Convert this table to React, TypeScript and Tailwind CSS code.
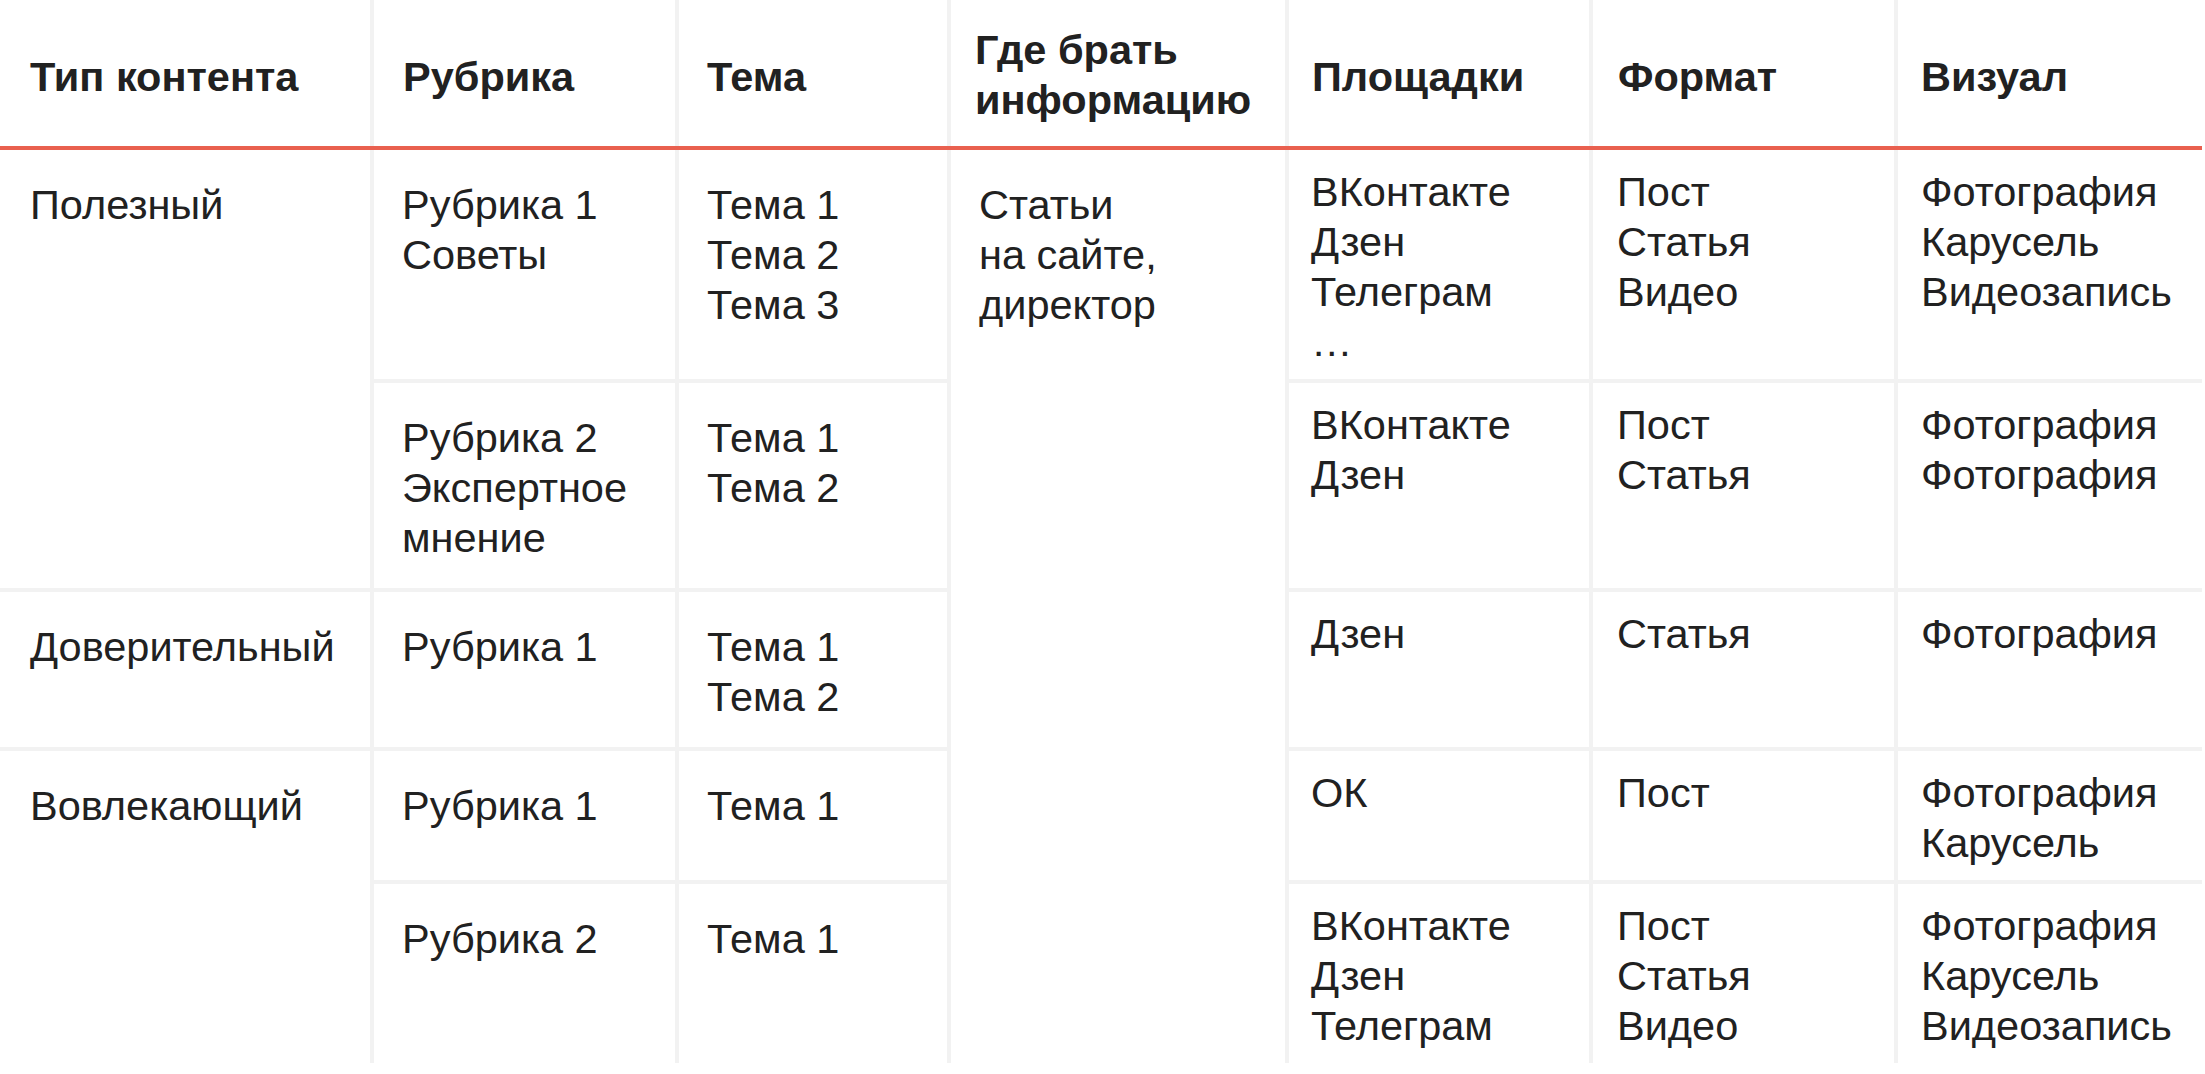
import React from "react";

const COLS = "grid-cols-[370px_301px_268px_334px_300px_301px_304px]";

const headers: { text: string[]; pl: string }[] = [
  { text: ["Тип контента"], pl: "pl-[30px]" },
  { text: ["Рубрика"], pl: "pl-[29px]" },
  { text: ["Тема"], pl: "pl-[28px]" },
  { text: ["Где брать", "информацию"], pl: "pl-[24px]" },
  { text: ["Площадки"], pl: "pl-[23px]" },
  { text: ["Формат"], pl: "pl-[25px]" },
  { text: ["Визуал"], pl: "pl-[23px]" },
];

const P1 = "pl-[30px]";
const P2 = "pl-[28px]";
const P3 = "pl-[28px]";
const P4 = "pl-[28px]";
const P5 = "pl-[22px]";
const P6 = "pl-[24px]";
const P7 = "pl-[23px]";

function Body({ lines, pl, top, className }: { lines: string[]; pl: string; top: "a" | "b"; className: string }) {
  return (
    <div
      className={
        "bg-white " +
        pl +
        " " +
        (top === "a" ? "pt-[30px] pb-[25px] " : "pt-[17px] pb-[12px] ") +
        className
      }
    >
      {lines.map((l, i) => (
        <div key={i} className="whitespace-nowrap">
          {l}
        </div>
      ))}
    </div>
  );
}

export default function App() {
  return (
    <div
      className="w-[2205px] h-[1074px] bg-white text-[#212121] overflow-hidden"
      style={{ fontFamily: '"Liberation Sans", Arial, sans-serif' }}
    >
      <div className="w-[2202px] text-[41.5px] leading-[50px]">
        {/* Header */}
        <div className={"grid " + COLS + " gap-x-[4px] bg-[#f2f2f2] h-[146px]"}>
          {headers.map((h, i) => (
            <div
              key={i}
              className={
                "bg-white font-bold " + h.pl + " " + (h.text.length > 1 ? "pt-[25px]" : "pt-[52px]")
              }
            >
              {h.text.map((t, j) => (
                <div key={j} className="whitespace-nowrap">
                  {t}
                </div>
              ))}
            </div>
          ))}
        </div>
        <div className="h-[4px] bg-[#e9604f]" />
        {/* Body */}
        <div className={"grid " + COLS + " gap-[4px] bg-[#f2f2f2]"}>
          {/* Row A */}
          <Body className="row-span-2 col-start-1 row-start-1" lines={["Полезный"]} pl={P1} top="a" />
          <Body className="col-start-2 row-start-1" lines={["Рубрика 1", "Советы"]} pl={P2} top="a" />
          <Body className="col-start-3 row-start-1" lines={["Тема 1", "Тема 2", "Тема 3"]} pl={P3} top="a" />
          <Body className="col-start-4 row-start-1 row-span-5" lines={["Статьи", "на сайте,", "директор"]} pl={P4} top="a" />
          <Body className="col-start-5 row-start-1" lines={["ВКонтакте", "Дзен", "Телеграм", "…"]} pl={P5} top="b" />
          <Body className="col-start-6 row-start-1" lines={["Пост", "Статья", "Видео"]} pl={P6} top="b" />
          <Body className="col-start-7 row-start-1" lines={["Фотография", "Карусель", "Видеозапись"]} pl={P7} top="b" />
          {/* Row B */}
          <Body className="col-start-2 row-start-2" lines={["Рубрика 2", "Экспертное", "мнение"]} pl={P2} top="a" />
          <Body className="col-start-3 row-start-2" lines={["Тема 1", "Тема 2"]} pl={P3} top="a" />
          <Body className="col-start-5 row-start-2" lines={["ВКонтакте", "Дзен"]} pl={P5} top="b" />
          <Body className="col-start-6 row-start-2" lines={["Пост", "Статья"]} pl={P6} top="b" />
          <Body className="col-start-7 row-start-2" lines={["Фотография", "Фотография"]} pl={P7} top="b" />
          {/* Row C */}
          <Body className="col-start-1 row-start-3" lines={["Доверительный"]} pl={P1} top="a" />
          <Body className="col-start-2 row-start-3" lines={["Рубрика 1"]} pl={P2} top="a" />
          <Body className="col-start-3 row-start-3" lines={["Тема 1", "Тема 2"]} pl={P3} top="a" />
          <Body className="col-start-5 row-start-3" lines={["Дзен"]} pl={P5} top="b" />
          <Body className="col-start-6 row-start-3" lines={["Статья"]} pl={P6} top="b" />
          <Body className="col-start-7 row-start-3" lines={["Фотография"]} pl={P7} top="b" />
          {/* Row D */}
          <Body className="col-start-1 row-start-4 row-span-2" lines={["Вовлекающий"]} pl={P1} top="a" />
          <Body className="col-start-2 row-start-4" lines={["Рубрика 1"]} pl={P2} top="a" />
          <Body className="col-start-3 row-start-4" lines={["Тема 1"]} pl={P3} top="a" />
          <Body className="col-start-5 row-start-4" lines={["ОК"]} pl={P5} top="b" />
          <Body className="col-start-6 row-start-4" lines={["Пост"]} pl={P6} top="b" />
          <Body className="col-start-7 row-start-4" lines={["Фотография", "Карусель"]} pl={P7} top="b" />
          {/* Row E */}
          <Body className="col-start-2 row-start-5" lines={["Рубрика 2"]} pl={P2} top="a" />
          <Body className="col-start-3 row-start-5" lines={["Тема 1"]} pl={P3} top="a" />
          <Body className="col-start-5 row-start-5" lines={["ВКонтакте", "Дзен", "Телеграм"]} pl={P5} top="b" />
          <Body className="col-start-6 row-start-5" lines={["Пост", "Статья", "Видео"]} pl={P6} top="b" />
          <Body className="col-start-7 row-start-5" lines={["Фотография", "Карусель", "Видеозапись"]} pl={P7} top="b" />
        </div>
      </div>
    </div>
  );
}
